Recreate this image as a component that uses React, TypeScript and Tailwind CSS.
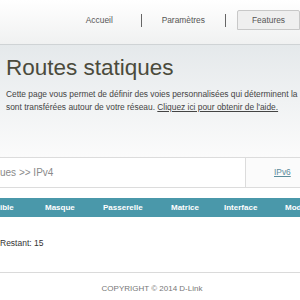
const NavBar = () => {
  return (
    <nav className="h-[45px] border-b border-[#cfd3d5] bg-gradient-to-b from-white to-[#f0f1f1] flex items-center pl-[58px] pb-[4px] text-[8.4px] text-[#555]">
      <div className="w-[85px] text-center">Accueil</div>
      <div className="w-px h-[13px] bg-[#666]" />
      <div className="w-[86px] text-center">Paramètres</div>
      <div className="w-px h-[13px] bg-[#666]" />
      <div className="ml-[11px] w-[63px] h-[20px] shrink-0 flex items-center justify-center border border-[#c8c8c8] rounded-t-[2px] bg-[#efefef]">
        Features
      </div>
    </nav>
  );
};

const PageHeader = () => {
  return (
    <section className="h-[112px] bg-gradient-to-b from-[#e5e9eb] to-[#fbfbfb] pl-[6px] pt-[12px]">
      <h1 className="text-[22.5px] leading-none text-[#4b4b3c] whitespace-nowrap">Routes statiques</h1>
      <p className="mt-[8px] text-[8.4px] leading-[13px] text-[#444] whitespace-nowrap">
        Cette page vous permet de définir des voies personnalisées qui déterminent la
        <br />
        sont transférées autour de votre réseau. <span className="underline">Cliquez ici pour obtenir de l'aide.</span>
      </p>
    </section>
  );
};

const Tabs = () => {
  return (
    <div className="h-[31px] border-y border-[#dcdcdc] flex bg-white">
      <div className="flex-1 flex items-center text-[10px] text-[#8a8a8a] whitespace-nowrap">ues &gt;&gt; IPv4</div>
      <div className="w-[55px] border-l border-[#dcdcdc] bg-[#fbfbfb] flex items-center pl-[28px] text-[8.4px] text-[#5b8c9b] underline">
        IPv6
      </div>
    </div>
  );
};

const columns = [
  { label: 'ible', w: 'w-[45px]' },
  { label: 'Masque', w: 'w-[58px]' },
  { label: 'Passerelle', w: 'w-[68px]' },
  { label: 'Matrice', w: 'w-[53px]' },
  { label: 'Interface', w: 'w-[61px]' },
  { label: 'Mode', w: 'w-[40px]' },
];

const RouteTable = () => {
  return (
    <div className="mt-[10px]">
      <div className="h-[19px] bg-[#4a98aa] flex items-center text-[8px] font-bold text-white whitespace-nowrap">
        {columns.map((c) => (
          <div key={c.label} className={`${c.w} shrink-0`}>
            {c.label}
          </div>
        ))}
      </div>
      <p className="mt-[20px] text-[8.5px] leading-[13px] text-[#333]">Restant: 15</p>
    </div>
  );
};

const App = () => {
  return (
    <div className="w-[300px] h-[300px] overflow-hidden bg-white font-['Liberation_Sans',Arial,sans-serif]">
      <NavBar />
      <PageHeader />
      <Tabs />
      <RouteTable />
      <footer className="mt-[22px] border-t border-[#dadada] pt-[10px] pl-[4px] text-center text-[8px] text-[#777]">
        COPYRIGHT © 2014 D-Link
      </footer>
    </div>
  );
};

export default App;
